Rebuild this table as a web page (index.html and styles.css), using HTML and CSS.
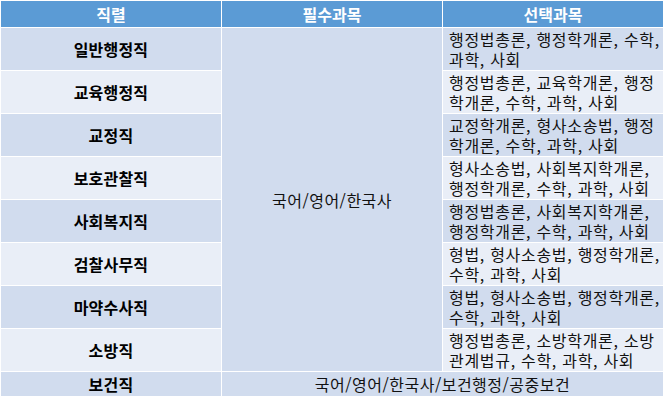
FILE: index.html
```html
<!DOCTYPE html>
<html lang="ko">
<head>
<meta charset="utf-8">
<link rel="stylesheet" href="styles.css">
</head>
<body>
<div class="table">
  <div class="cell head">직렬</div>
  <div class="cell head">필수과목</div>
  <div class="cell head">선택과목</div>

  <div class="cell name b1">일반행정직</div>
  <div class="cell common b1">국어/영어/한국사</div>
  <div class="cell opt b1">행정법총론, 행정학개론, 수학,<br>과학, 사회</div>

  <div class="cell name b2">교육행정직</div>
  <div class="cell opt b2">행정법총론, 교육학개론, 행정<br>학개론, 수학, 과학, 사회</div>

  <div class="cell name b1">교정직</div>
  <div class="cell opt b1">교정학개론, 형사소송법, 행정<br>학개론, 수학, 과학, 사회</div>

  <div class="cell name b2">보호관찰직</div>
  <div class="cell opt b2">형사소송법, 사회복지학개론,<br>행정학개론, 수학, 과학, 사회</div>

  <div class="cell name b1">사회복지직</div>
  <div class="cell opt b1">행정법총론, 사회복지학개론,<br>행정학개론, 수학, 과학, 사회</div>

  <div class="cell name b2">검찰사무직</div>
  <div class="cell opt b2">형법, 형사소송법, 행정학개론,<br>수학, 과학, 사회</div>

  <div class="cell name b1">마약수사직</div>
  <div class="cell opt b1">형법, 형사소송법, 행정학개론,<br>수학, 과학, 사회</div>

  <div class="cell name b2">소방직</div>
  <div class="cell opt b2">행정법총론, 소방학개론, 소방<br>관계법규, 수학, 과학, 사회</div>

  <div class="cell name b1">보건직</div>
  <div class="cell wide b1">국어/영어/한국사/보건행정/공중보건</div>
</div>
</body>
</html>
```

FILE: styles.css
```css
html, body {
  margin: 0;
  padding: 0;
  background: #ffffff;
}

body {
  font-family: "Noto Sans CJK KR", "Noto Sans", sans-serif;
  color: #111111;
}

.table {
  display: grid;
  grid-template-columns: 220px 220px 220px;
  grid-template-rows: 26px repeat(8, 42px) 24px;
  gap: 1px;
  padding: 1px;
  width: max-content;
  background: #ffffff;
}

.cell {
  display: flex;
  align-items: center;
  font-size: 16px;
  line-height: 20px;
  white-space: nowrap;
}

.head {
  justify-content: center;
  background: #5b9bd5;
  color: #ffffff;
  font-weight: bold;
}

.name {
  justify-content: center;
  font-weight: bold;
  color: #000000;
  letter-spacing: 0.2px;
}

.b1 {
  background: #d1dcee;
}

.b2 {
  background: #e9eef7;
}

.common {
  grid-column: 2;
  grid-row: 2 / span 8;
  justify-content: center;
  background: #d1dcee;
  letter-spacing: 0.5px;
}

.opt {
  grid-column: 3;
  padding-left: 6px;
  letter-spacing: 0.7px;
}

.wide {
  grid-column: 2 / span 2;
  justify-content: center;
  letter-spacing: 0.5px;
}
```
